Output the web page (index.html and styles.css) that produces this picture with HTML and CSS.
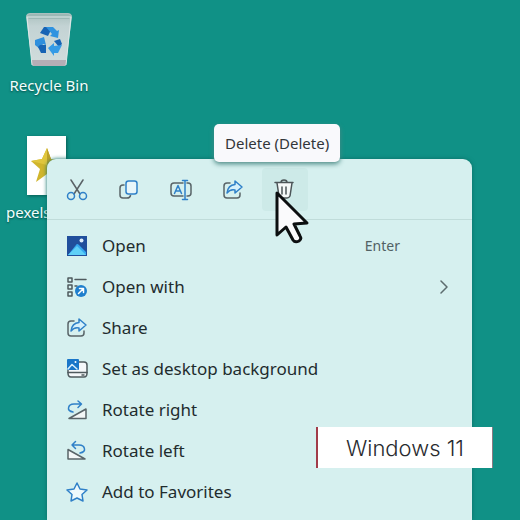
FILE: index.html
```html
<!DOCTYPE html>
<html lang="en">
<head>
<meta charset="utf-8">
<meta name="viewport" content="width=device-width, initial-scale=1">
<title>Desktop</title>
<link rel="stylesheet" href="styles.css">
</head>
<body>
<main class="desktop">
  <div class="shortcuts">
    <a class="shortcut" href="#recycle-bin">
      <svg class="bin" viewBox="0 0 46 56" aria-hidden="true">
        <defs>
          <linearGradient id="bin-body" x1="0" y1="0" x2="0" y2="1">
            <stop offset="0" stop-color="#a9bfbd"/><stop offset=".25" stop-color="#c3d3d4"/><stop offset="1" stop-color="#d2dddd"/>
          </linearGradient>
        </defs>
        <path d="M0 4Q1 1 4 1H42Q45 1 46 4L40 52Q40 54 38 54H8Q6 54 6 52Z" fill="url(#bin-body)"/>
        <path d="M1 4L4 2H42L45 4L43 7H3Z" fill="#9db8b5"/>
        <path d="M5 48H41L40 52Q40 54 38 54H8Q6 54 6 52Z" fill="#b5aeb6"/>
        <path d="M1 5L6 53M45 5L40 53M1 5H45" fill="none" stroke="#dde8e8"/>
        <path d="M14 21L18 15H23L25 18L22 24Z" fill="#1763b4"/>
        <path d="M20 15H27L31 19L33 18L32 26L24 24L26 22Z" fill="#2f93e0"/>
        <path d="M9 28L18 25L20 33L17 32L14 37L9 33Z" fill="#2f8fdd"/>
        <path d="M12 35L14 33H20V41H15Z" fill="#1763b4"/>
        <path d="M28 29L34 27L36 32L33 35Z" fill="#1763b4"/>
        <path d="M22 36L28 31V34L36 33L32 41H28V44Z" fill="#359be6"/>
      </svg>
      <span class="label">Recycle Bin</span>
    </a>
    <a class="shortcut" href="#pexels">
      <svg class="thumb" viewBox="0 0 39 59" aria-hidden="true">
        <path d="M0 0H39V59H0Z" fill="#fff"/>
        <path d="M20 12L24 23L36 24L27 32L30 44L20 38L9 46L13 33L4 25L15 23Z" fill="#d0b52c"/>
        <path d="M20 12L24 23L20 29L27 32L30 44L20 38Z" fill="#bda129"/>
        <path d="M20 12L20 29L4 25L15 23Z" fill="#e0c63d"/>
      </svg>
      <span class="label label-file">pexels</span>
    </a>
  </div>

  <div class="menu">
    <div class="toolbar">
      <button class="tool" type="button" aria-label="Cut">
        <svg viewBox="0 0 22 22"><path d="M5 1L14 15M17 1L8 15" stroke="#5a6266"/><circle cx="5" cy="17" r="3.5" stroke="#2f80c8"/><circle cx="17" cy="17" r="3.5" stroke="#2f80c8"/></svg>
      </button>
      <button class="tool" type="button" aria-label="Copy">
        <svg viewBox="0 0 22 22"><path d="M6 6H5Q2 6 2 9V16Q2 19 5 19H9Q12 19 12.500 16.500" stroke="#596468"/><rect x="8" y="2" width="11" height="13" rx="2.500" fill="#e8f6fa" stroke="#2f80c8"/></svg>
      </button>
      <button class="tool" type="button" aria-label="Rename">
        <svg viewBox="0 0 22 22"><path d="M13 4H4Q1 4 1 7V14Q1 17 4 17H13M17 4H18Q21 4 21 7V14Q21 17 18 17H17" stroke="#596468"/><path d="M4.500 14.500L8 6.500L11.500 14.500M5.500 12H10.500M15 2V20M12.500 1.500H17.500M12.500 20.500H17.500" stroke="#2f80c8"/></svg>
      </button>
      <button class="tool" type="button" aria-label="Share">
        <svg viewBox="0 0 22 22"><path d="M8 4H5Q2 4 2 7V16Q2 19 5 19H15Q18 19 18 16V14" stroke="#596468"/><path d="M13 2L20 8L13 14V11Q8 10 5 14Q6 6 13 5.500Z" fill="#d5f0fb" stroke="#2f80c8"/></svg>
      </button>
      <button class="tool tool-active" type="button" aria-label="Delete" aria-describedby="delete-tip">
        <svg viewBox="0 0 22 22"><path d="M3 4L5 17Q6 19 8 19H13Q15 19 16 17L18 4" fill="#f4f8f8" stroke="#4c5558"/><path d="M1 3.500H19M7 3.500Q7 1 10 1Q13 1 13 3.500M8 8V15M12 8V15" stroke="#4c5558"/></svg>
      </button>
    </div>
    <div class="tooltip" role="tooltip" id="delete-tip">Delete (Delete)</div>

    <ul class="items">
      <li><button class="item" type="button">
        <svg viewBox="0 0 22 22"><path d="M1 1H21V21H1Z" fill="#204f9c"/><path d="M2 20L10 10Q11 8 13 10L20 17V20Z" fill="#35a7ef"/><path d="M2 20L11 11L20 20Z" fill="#5fd0f7"/><circle cx="15.500" cy="5.500" r="2" fill="#dcecfb"/></svg>
        <span>Open</span><kbd>Enter</kbd>
      </button></li>
      <li><button class="item" type="button">
        <svg viewBox="0 0 22 22"><path d="M2 2H6V6H2ZM2 9H6V13H2ZM2 16H6V20H2ZM9 3.500H20M9 10H11" stroke="#4f5a5e"/><circle cx="15" cy="15" r="6" fill="#1f7fcd"/><path d="M12.500 17.500L17 13M13.500 12.500H17.500V16.500" stroke="#fff"/></svg>
        <span>Open with</span>
        <svg class="chevron" viewBox="0 0 8 14"><path d="M1 1L7 7L1 13" stroke="#5c6c6e"/></svg>
      </button></li>
      <li><button class="item" type="button">
        <svg viewBox="0 0 22 22"><path d="M8 4H5Q2 4 2 7V16Q2 19 5 19H15Q18 19 18 16V14" stroke="#596468"/><path d="M13 2L20 8L13 14V11Q8 10 5 14Q6 6 13 5.500Z" fill="#d5f0fb" stroke="#2f80c8"/></svg>
        <span>Share</span>
      </button></li>
      <li><button class="item" type="button">
        <svg viewBox="0 0 22 22"><path d="M12 4H18Q21 4 21 7V15Q21 19 18 19H5Q2 19 2 15V11" fill="#f5f8fa" stroke="#4f5a5e"/><path d="M2 14.500H21M16 17H18" stroke="#4f5a5e"/><rect x="1" y="1" width="12" height="11" rx="1" fill="#1976c9"/><path d="M2 11L6 6.500L11 11" stroke="#d9effc"/><circle cx="9.500" cy="4" r="1" fill="#fff"/></svg>
        <span>Set as desktop background</span>
      </button></li>
      <li><button class="item" type="button">
        <svg viewBox="0 0 22 22"><path d="M3 19.500L20 10V19.500Z" fill="#f3f7f7" stroke="#596468"/><path d="M7 13Q2 12 2.500 9Q3 5 8 5H15M12 2L15.500 5L12 8.500" stroke="#2f80c8"/></svg>
        <span>Rotate right</span>
      </button></li>
      <li><button class="item" type="button">
        <svg viewBox="0 0 22 22"><path d="M2 9.500V19H19Z" fill="#f3f7f7" stroke="#596468"/><path d="M14 13Q19 12 18.500 9Q18 5 13 5H6M9.500 1.500L6 5L9.500 8.500" stroke="#2f80c8"/></svg>
        <span>Rotate left</span>
      </button></li>
      <li><button class="item" type="button">
        <svg viewBox="0 0 22 22"><path d="M11 2L14 8L21 9L16 13.500L17 20L11 17L5 20L6 13.500L1 9L8 8Z" fill="#eef9fc" stroke="#2f80c8"/></svg>
        <span>Add to Favorites</span>
      </button></li>
    </ul>
  </div>

  <svg class="pointer" viewBox="0 0 36 54" aria-hidden="true">
    <path d="M2 2V44L11 36L18 49Q20 52 24 50Q27 48 25 45L19 33L32 32Z" fill="#fafafc" stroke="#0c0f10" stroke-width="3" stroke-linejoin="round"/>
  </svg>

  <p class="caption">Windows 11</p>
</main>
</body>
</html>
```
FILE: styles.css
```css
* {
  box-sizing: border-box;
}

body {
  margin: 0;
  font-family: "Noto Sans", "Open Sans", sans-serif;
}

button {
  border: 0;
  background: none;
  font: inherit;
  color: inherit;
}

.desktop {
  position: relative;
  min-height: 100vh;
  overflow: hidden;
  background: #109186;
}

/* Desktop shortcuts */
.shortcuts {
  display: flex;
  flex-direction: column;
  align-items: flex-start;
  gap: 40px;
  padding: 12px 6px;
}

.shortcut {
  display: flex;
  flex-direction: column;
  align-items: center;
  gap: 6px;
  color: #f2fffd;
  font-size: 15px;
  line-height: 22px;
  text-decoration: none;
  text-shadow: 0 1px 2px #044a44;
}

.shortcut:first-child {
  width: 86px;
}

.shortcut:last-child {
  width: 80px;
}

.bin {
  width: 46px;
  height: 56px;
}

.thumb {
  width: 39px;
  height: 59px;
  box-shadow: 1px 1px 3px #075a52;
}

.label {
  white-space: nowrap;
}

.label-file {
  align-self: flex-start;
}

/* Context menu */
.menu {
  position: absolute;
  top: 159px;
  bottom: 0;
  left: 47px;
  right: 48px;
  border-radius: 9px 9px 0 0;
  background: #d6f0ef;
  box-shadow: 0 0 4px #0b6e66;
  color: #1f2c2e;
}

.menu svg {
  flex: none;
  width: 22px;
  height: 22px;
  fill: none;
  stroke-width: 1.5;
  stroke-linecap: round;
  stroke-linejoin: round;
}

.toolbar {
  display: flex;
  gap: 6px;
  padding: 9px 7px 8px;
  border-bottom: 1px solid #c0dcda;
}

.tool {
  display: grid;
  place-items: center;
  width: 46px;
  height: 43px;
  padding: 0;
  border-radius: 4px;
}

.tool-active {
  background: #cdeae8;
}

.tooltip {
  position: absolute;
  top: -35px;
  left: 167px;
  padding: 8px 11px;
  border-radius: 5px;
  background: #f9f9fc;
  box-shadow: 0 2px 5px #4b8984;
  color: #33363a;
  font-size: 15px;
  line-height: 22px;
  white-space: nowrap;
}

.items {
  margin: 0;
  padding: 5px 0;
  list-style: none;
}

.item {
  display: flex;
  align-items: center;
  gap: 14px;
  width: 100%;
  height: 41px;
  padding: 0 24px 0 19px;
  font-size: 17px;
  text-align: left;
}

.item kbd {
  margin-left: auto;
  padding-right: 48px;
  color: #526164;
  font-family: inherit;
  font-size: 14px;
}

.menu .chevron {
  width: 8px;
  height: 14px;
  margin-left: auto;
}

.pointer {
  position: absolute;
  top: 191px;
  left: 275px;
  width: 36px;
  height: 54px;
}

.caption {
  position: absolute;
  right: 27px;
  bottom: 52px;
  margin: 0;
  padding: 1px 28px 0;
  border-left: 2px solid #a13c49;
  border-right: 1px solid #8b7b83;
  background: #fff;
  color: #292b2f;
  font-family: Inter, sans-serif;
  font-size: 22px;
  font-weight: 300;
  line-height: 40px;
}
```
